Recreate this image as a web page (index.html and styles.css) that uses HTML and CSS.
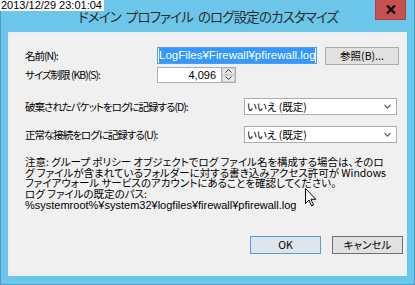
FILE: index.html
```html
<!DOCTYPE html>
<html>
<head>
  <title>ドメイン プロファイル のログ設定のカスタマイズ</title>
  <link rel="stylesheet" href="styles.css">
</head>
<body>
  <div class="window">
    <div class="titlebar">
      <span class="stamp">2013/12/29 23:01:04</span>
      <span class="title">ドメイン プロファイル のログ設定のカスタマイズ</span>
      <span class="close">
        <svg width="10" height="9" viewBox="0 0 10 9"><path d="M1 0.5 L9 8.5 M9 0.5 L1 8.5" stroke="#111" stroke-width="2.4"/></svg>
      </span>
    </div>
    <div class="client">
      <div class="row">
        <label class="label">名前(N):</label>
        <div class="textbox name-box"><span class="selected">LogFiles¥Firewall¥pfirewall.log</span></div>
        <button class="btn browse">参照(B)...</button>
      </div>
      <div class="row row-size">
        <label class="label">サイズ制限 (KB)(S):</label>
        <div class="textbox size-box">4,096</div>
        <div class="spinner">
          <span class="spin"><svg width="7" height="4" viewBox="0 0 7 4"><path d="M0.5 3.5 L3.5 0.5 L6.5 3.5" fill="none" stroke="#333"/></svg></span>
          <span class="spin"><svg width="7" height="4" viewBox="0 0 7 4"><path d="M0.5 0.5 L3.5 3.5 L6.5 0.5" fill="none" stroke="#333"/></svg></span>
        </div>
      </div>
      <div class="row row-drop">
        <label class="label wide">破棄されたパケットをログに記録する(D):</label>
        <div class="select">
          <span>いいえ (既定)</span>
          <svg width="7" height="5" viewBox="0 0 7 5"><path d="M0.5 1 L3.5 4 L6.5 1" fill="none" stroke="#666" stroke-width="1.3"/></svg>
        </div>
      </div>
      <div class="row row-ok">
        <label class="label wide">正常な接続をログに記録する(U):</label>
        <div class="select">
          <span>いいえ (既定)</span>
          <svg width="7" height="5" viewBox="0 0 7 5"><path d="M0.5 1 L3.5 4 L6.5 1" fill="none" stroke="#666" stroke-width="1.3"/></svg>
        </div>
      </div>
      <div class="notice">
        <div>注意: グループ ポリシー オブジェクトでログ ファイル名を構成する場合は、そのロ</div>
        <div>グ ファイルが含まれているフォルダーに対する書き込みアクセス許可が Windows</div>
        <div>ファイアウォール サービスのアカウントにあることを確認してください。</div>
        <div>ログ ファイルの既定のパス:</div>
        <div class="path">%systemroot%¥system32¥logfiles¥firewall¥pfirewall.log</div>
      </div>
      <div class="actions">
        <button class="btn default">OK</button>
        <button class="btn cancel">キャンセル</button>
      </div>
      <svg class="cursor" width="12" height="19" viewBox="0 0 12 19">
        <path d="M0.5 0.5 L0.5 15.5 L4 12 L6.5 18 L8.5 17 L6 11.3 L10.8 11.3 Z" fill="#fff" stroke="#000" stroke-width="1"/>
      </svg>
    </div>
  </div>
</body>
</html>
```

FILE: styles.css
```css
body {
  margin: 0;
  background-color: #3d8fb3;
  font-family: "Noto Sans CJK JP", "Liberation Sans", sans-serif;
  font-feature-settings: "palt";
  color: #000;
}
.window {
  width: 415px;
  height: 285px;
  box-sizing: border-box;
  background-color: #6cc6ea;
  border: 1px solid #4a9cc2;
  border-top: none;
  display: flex;
  flex-direction: column;
}
.titlebar {
  position: relative;
  height: 32px;
  display: flex;
  align-items: flex-start;
  padding-left: 77px;
}
.stamp {
  position: absolute;
  left: -1px;
  top: 0;
  z-index: 1;
  background-color: #fff;
  font-family: "Liberation Sans", sans-serif;
  font-size: 11px;
  line-height: 11px;
  padding: 0 2px 0 1px;
  color: #000;
}
.title {
  margin-top: 8px;
  font-size: 13.5px;
  letter-spacing: -0.9px;
  word-spacing: 3px;
  color: #2b2b2b;
  line-height: 17px;
  white-space: nowrap;
}
.close {
  position: absolute;
  right: 8px;
  top: 0;
  width: 31px;
  height: 20px;
  background-color: #c75050;
  box-sizing: border-box;
  border: 1px solid #a84444;
  border-top: none;
  display: flex;
  justify-content: center;
  align-items: center;
}
.client {
  position: relative;
  margin: 0 7px;
  height: 244px;
  box-sizing: border-box;
  background-color: #f0f0f0;
  border: 1px solid #e2eef4;
  padding: 14px 0 0 16px;
  display: flex;
  flex-direction: column;
}
.row {
  display: flex;
  align-items: center;
  height: 17px;
}
.label {
  width: 132px;
  flex: none;
  font-size: 10.5px;
  letter-spacing: -1px;
  white-space: nowrap;
}
.label.wide {
  width: 219px;
}
.textbox {
  box-sizing: border-box;
  height: 17px;
  background-color: #fff;
  border: 1px solid #abadb3;
  font-family: "Liberation Sans", sans-serif;
  font-size: 11px;
  line-height: 15px;
}
.name-box {
  width: 160px;
  border-color: #569de5;
  padding: 0 1px;
}
.selected {
  display: block;
  background-color: #3399ff;
  color: #fff;
  white-space: nowrap;
  overflow: hidden;
  font-size: 11.5px;
}
.btn {
  box-sizing: border-box;
  height: 18px;
  padding: 0;
  background-color: #e1e1e1;
  border: 1px solid #adadad;
  font-family: "Noto Sans CJK JP", "Liberation Sans", sans-serif;
  font-feature-settings: "palt";
  font-size: 10.5px;
  color: #000;
  line-height: 14px;
}
.browse {
  width: 74px;
  margin-left: 8px;
}
.row-size {
  margin-top: 3px;
  height: 15px;
}
.size-box {
  width: 65px;
  height: 16px;
  text-align: right;
  padding-right: 5px;
  line-height: 14px;
}
.spinner {
  display: flex;
  flex-direction: column;
  width: 14px;
  height: 16px;
  box-sizing: border-box;
  border: 1px solid #abadb3;
  border-left: none;
  background-color: #fff;
}
.spin {
  flex: 1;
  display: flex;
  justify-content: center;
  align-items: center;
  background-color: #e8e8e8;
  border: 1px solid #d0d0d0;
}
.row-drop {
  margin-top: 16px;
}
.row-ok {
  margin-top: 11px;
}
.select {
  box-sizing: border-box;
  width: 153px;
  height: 17px;
  background-color: #fff;
  border: 1px solid #abadb3;
  display: flex;
  align-items: center;
  justify-content: space-between;
  padding: 0 5px 0 2px;
  font-size: 10.5px;
}
.notice {
  margin-top: 14px;
  font-size: 10.5px;
  line-height: 10.5px;
  white-space: nowrap;
}
.notice .path {
  font-family: "Liberation Sans", sans-serif;
  font-size: 11px;
  line-height: 10.5px;
  margin-top: 1px;
}
.actions {
  margin-top: auto;
  margin-bottom: 21px;
  display: flex;
  justify-content: flex-end;
  gap: 11px;
  padding-right: 3px;
}
.actions .btn {
  width: 71px;
}
.default {
  background-color: #dde4ea;
  border-color: #5b9bd5;
}
.cancel {
  border-color: #707070;
}
.cursor {
  position: absolute;
  left: 296px;
  top: 155px;
}
```
